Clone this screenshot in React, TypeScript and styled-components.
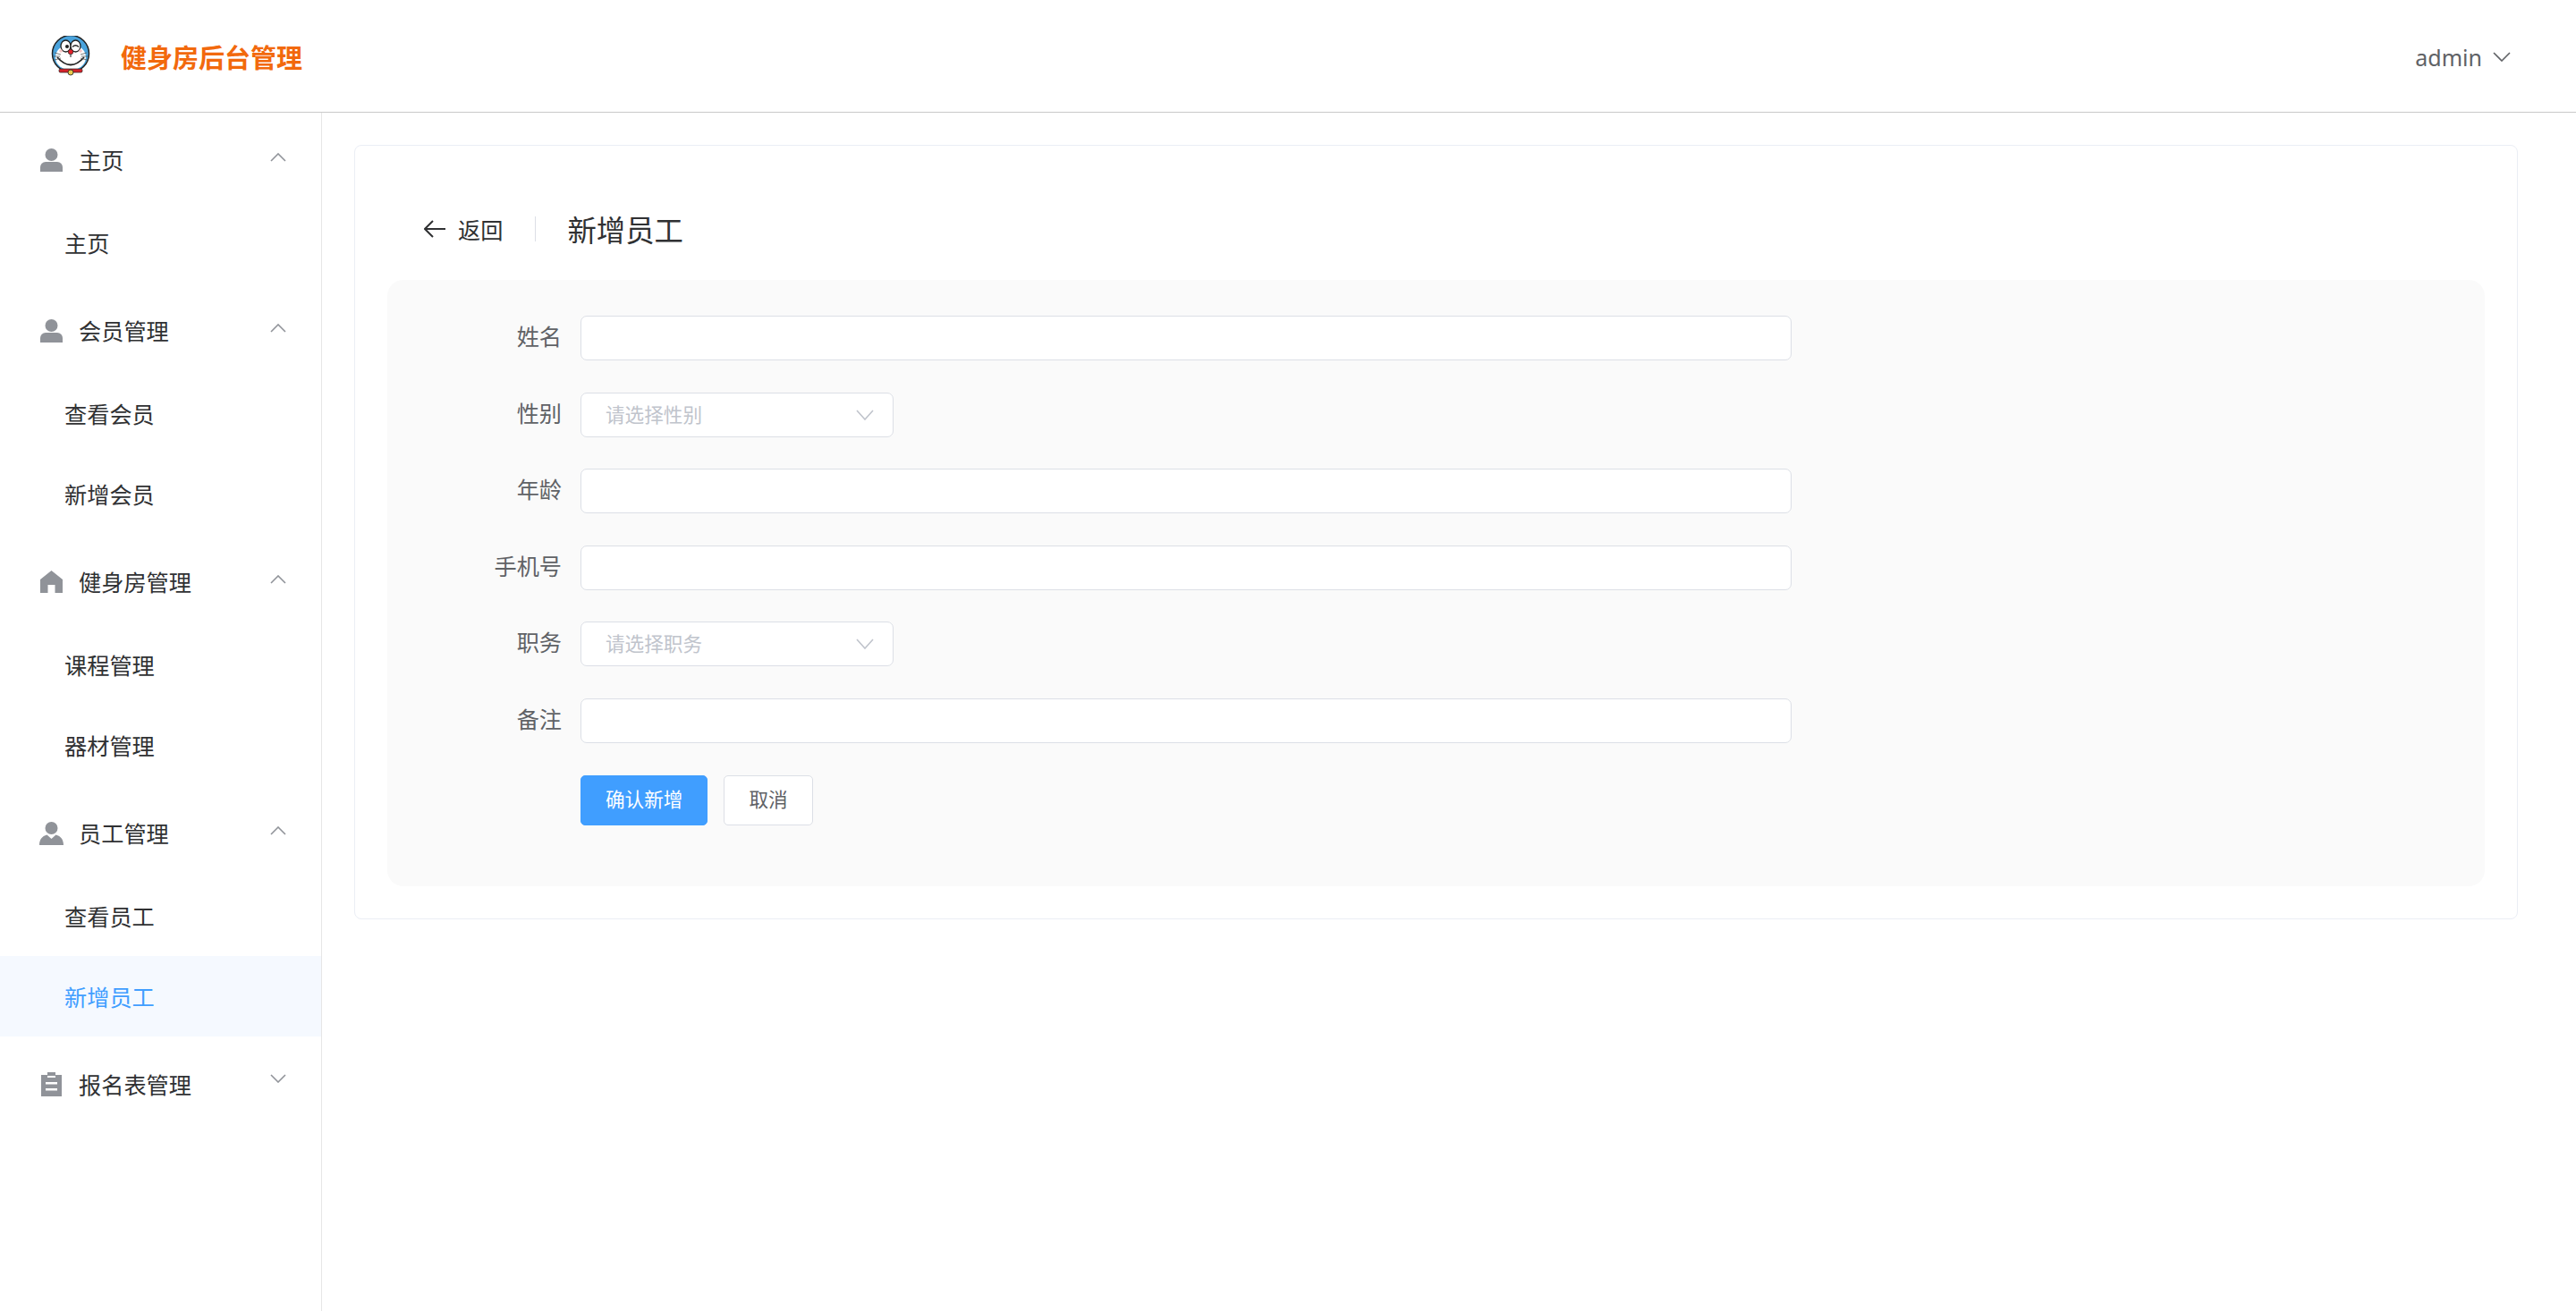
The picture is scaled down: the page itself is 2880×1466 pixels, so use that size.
import React from "react";
import styled, {createGlobalStyle} from "styled-components";

const GlobalStyle = createGlobalStyle`
  html, body {
    margin: 0;
    padding: 0;
    background: #fff;
  }
  body {
    font-family: "Noto Sans", "Noto Sans CJK SC", sans-serif;
    color: #303133;
  }
  * {
    box-sizing: border-box;
  }
`;

const Page = styled.div`
  position: relative;
  width: 2880px;
  height: 1466px;
  overflow: hidden;
`;

const Watermark = styled.div`
  position: absolute;
  top: 84px;
  left: -40px;
  display: flex;
  flex-direction: column;
  gap: 80px;
  pointer-events: none;
  z-index: 5;
`;

const WatermarkRow = styled.div`
  height: 50px;
  line-height: 50px;
  font-family: "Liberation Sans", sans-serif;
  font-size: 38px;
  letter-spacing: 4px;
  white-space: nowrap;
  color: rgba(0, 0, 0, 0.012);
`;

const Header = styled.header`
  height: 126px;
  display: flex;
  align-items: center;
  justify-content: space-between;
  padding: 0 73px 0 55px;
  border-bottom: 1px solid #c9c9c9;
`;

const Brand = styled.div`
  display: flex;
  align-items: center;
  gap: 32px;
`;

const BrandTitle = styled.div`
  font-size: 29px;
  font-weight: 700;
  color: #f2690d;
`;

const UserMenu = styled.div`
  display: flex;
  align-items: center;
  gap: 12px;
  margin-top: 2px;
  font-size: 25px;
  color: #606266;
`;

const Body = styled.div`
  display: flex;
  height: 1340px;
`;

const Aside = styled.aside`
  width: 360px;
  flex: none;
  border-right: 1px solid #e6e6e6;
`;

const GroupTitle = styled.div`
  height: 100.8px;
  display: flex;
  align-items: center;
  padding: 0 39px 0 45px;
`;

const GroupIcon = styled.span`
  width: 25px;
  height: 27px;
  margin: 6px 18px 0 0;
  display: flex;
  align-items: center;
  justify-content: center;
`;

const GroupLabel = styled.span`
  font-size: 25.2px;
  margin-top: 4px;
  color: #303133;
`;

const Arrow = styled.svg`
  display: block;
  fill: none;
  stroke-width: 1.6;
`;

const GroupArrow = styled(Arrow)`
  margin-left: auto;
  stroke: #909399;
`;

const MenuItem = styled.div<{$active?: boolean}>`
  height: 90px;
  display: flex;
  align-items: center;
  padding: 0 0 1px 72px;
  font-size: 25.2px;
  color: ${p => (p.$active ? "#409eff" : "#303133")};
  background: ${p => (p.$active ? "#f5f9ff" : "transparent")};
`;

const Main = styled.main`
  flex: 1;
  padding: 36px 65px 0 36px;
`;

const Card = styled.section`
  height: 866px;
  padding: 36px;
  border: 1px solid #ebeef5;
  border-radius: 8px;
  background: #fff;
`;

const PageHead = styled.div`
  height: 114px;
  display: flex;
  align-items: center;
  padding: 0 0 0 41px;
`;

const BackLink = styled.div`
  display: flex;
  align-items: center;
  gap: 14px;
  font-size: 25.2px;
  color: #303133;
`;

const HeadDivider = styled.div`
  width: 1px;
  height: 28px;
  margin: 0 35px 0 36px;
  background: #dcdfe6;
`;

const PageTitle = styled.div`
  padding-bottom: 2px;
  font-size: 32.4px;
  color: #303133;
`;

const FormPanel = styled.div`
  height: 678px;
  padding: 40px 0 0;
  display: flex;
  flex-direction: column;
  gap: 35.6px;
  background: #fafafa;
  border-radius: 18px;
`;

const FormRow = styled.div`
  height: 50px;
  display: flex;
  align-items: center;
`;

const FormLabel = styled.label`
  width: 216px;
  flex: none;
  padding: 0 21px 6px 0;
  text-align: right;
  font-size: 25.2px;
  color: #606266;
`;

const TextInput = styled.div`
  width: 1354px;
  height: 50px;
  background: #fff;
  border: 1px solid #dcdfe6;
  border-radius: 7px;
`;

const SelectBox = styled.div`
  width: 350px;
  height: 50px;
  display: flex;
  align-items: center;
  justify-content: space-between;
  padding: 0 21px 3px 27px;
  background: #fff;
  border: 1px solid #dcdfe6;
  border-radius: 7px;
  font-size: 21.6px;
  color: #c0c4cc;
`;

const SelectArrow = styled(Arrow)`
  margin-top: 3px;
  stroke: #c0c4cc;
`;

const ButtonRow = styled.div`
  display: flex;
  gap: 18px;
  padding-left: 216px;
`;

const Button = styled.button<{$primary?: boolean}>`
  height: 56px;
  padding: 0 27px 5px;
  border-radius: 5px;
  border: 1px solid ${p => (p.$primary ? "#409eff" : "#dcdfe6")};
  background: ${p => (p.$primary ? "#409eff" : "#fff")};
  color: ${p => (p.$primary ? "#fff" : "#606266")};
  font-family: inherit;
  font-size: 21.6px;
`;

const IconFill = "#909399";

const UserIcon = () => (
    <svg width="25" height="26" viewBox="0 0 25 26" fill={IconFill}>
        <circle cx="12.5" cy="7" r="7"/>
        <path d="M0 26v-5a6 6 0 0 1 6-6h13a6 6 0 0 1 6 6v5z"/>
    </svg>
);

const StaffIcon = () => (
    <svg width="27" height="26" viewBox="0 0 27 26" fill={IconFill} style={{flex: "none"}}>
        <circle cx="13.5" cy="7" r="7"/>
        <path d="M0 26c0-6 3-10 8.500-11.500L13.500 19l5-4.500C24 16 27 20 27 26z"/>
    </svg>
);

const HouseIcon = () => (
    <svg width="25" height="25" viewBox="0 0 25 25" fill={IconFill}>
        <path d="M12.500 0L25 10v15h-8.500V16h-8v9H0V10z"/>
    </svg>
);

const ClipboardIcon = () => (
    <svg width="23" height="27" viewBox="0 0 23 27" fill={IconFill}>
        <path d="M7 0h9v3h7v24H0V3h7z"/>
        <path d="M5 11h13v2.500H5zM5 18h13v2.500H5zM7 4h9v2H7z" fill="#fff"/>
    </svg>
);

const ChevronUp = () => (
    <GroupArrow width="18" height="10" viewBox="0 0 18 10">
        <path d="M1 9l8-8 8 8"/>
    </GroupArrow>
);

const ChevronDown = () => (
    <GroupArrow width="18" height="10" viewBox="0 0 18 10" style={{marginTop: -7}}>
        <path d="M1 1l8 8 8-8"/>
    </GroupArrow>
);

const Logo = () => (
    <svg width="48" height="46" viewBox="0 0 46 46">
        <circle cx="23" cy="20" r="20.500" fill="#4aa3dc" stroke="#222" strokeWidth="1.500"/>
        <ellipse cx="23" cy="24" rx="17" ry="14.500" fill="#fff"/>
        <ellipse cx="17.500" cy="11.500" rx="5.500" ry="6.500" fill="#fff" stroke="#222" strokeWidth="1.300"/>
        <ellipse cx="28.500" cy="11.500" rx="5.500" ry="6.500" fill="#fff" stroke="#222" strokeWidth="1.300"/>
        <circle cx="19" cy="12" r="2" fill="#222"/>
        <path d="M25 12.500q3.500-3.500 7 0" fill="none" stroke="#222" strokeWidth="1.500"/>
        <circle cx="23" cy="18" r="2.800" fill="#e3202a" stroke="#222" strokeWidth=".7"/>
        <path d="M23 21v11" stroke="#222" strokeWidth="1"/>
        <path d="M8 24q15 17 30 0" fill="#fff" stroke="#222" strokeWidth="1.800"/>
        <path d="M5 19l7 2M4 23l7 0M5 27l7-2M41 19l-7 2M42 23l-7 0M41 27l-7-2" stroke="#555" strokeWidth=".8"/>
        <circle cx="12" cy="17" r="1.800" fill="#f7c6c6"/>
        <circle cx="34" cy="17" r="1.800" fill="#f7c6c6"/>
        <rect x="10" y="37" width="26" height="4" rx="1.500" fill="#d5232a" stroke="#222" strokeWidth=".7"/>
        <circle cx="23" cy="41" r="3" fill="#e9c94a" stroke="#222" strokeWidth=".8"/>
    </svg>
);

const menu = [
    {icon: <UserIcon/>, title: "主页", open: true, items: ["主页"]},
    {icon: <UserIcon/>, title: "会员管理", open: true, items: ["查看会员", "新增会员"]},
    {icon: <HouseIcon/>, title: "健身房管理", open: true, items: ["课程管理", "器材管理"]},
    {icon: <StaffIcon/>, title: "员工管理", open: true, items: ["查看员工", "新增员工"]},
    {icon: <ClipboardIcon/>, title: "报名表管理", open: false, items: [] as string[]},
];

const fields = [
    {label: "姓名"},
    {label: "性别", placeholder: "请选择性别"},
    {label: "年龄"},
    {label: "手机号"},
    {label: "职务", placeholder: "请选择职务"},
    {label: "备注"},
];

const App = () => (
    <Page>
        <GlobalStyle/>
        <Header>
            <Brand>
                <Logo/>
                <BrandTitle>健身房后台管理</BrandTitle>
            </Brand>
            <UserMenu>
                admin
                <Arrow width="20" height="11" viewBox="0 0 20 11" stroke="#606266">
                    <path d="M1 1l9 9 9-9"/>
                </Arrow>
            </UserMenu>
        </Header>
        <Body>
            <Aside>
                {menu.map(group => (
                    <div key={group.title}>
                        <GroupTitle>
                            <GroupIcon>{group.icon}</GroupIcon>
                            <GroupLabel>{group.title}</GroupLabel>
                            {group.open ? <ChevronUp/> : <ChevronDown/>}
                        </GroupTitle>
                        {group.items.map((item, i) => (
                            <MenuItem key={i} $active={item === "新增员工"}>{item}</MenuItem>
                        ))}
                    </div>
                ))}
            </Aside>
            <Main>
                <Card>
                    <PageHead>
                        <BackLink>
                            <svg width="24" height="20" viewBox="0 0 24 20" fill="none" stroke="#303133" strokeWidth="2">
                                <path d="M10 1l-9 9 9 9M1 10h23"/>
                            </svg>
                            返回
                        </BackLink>
                        <HeadDivider/>
                        <PageTitle>新增员工</PageTitle>
                    </PageHead>
                    <FormPanel>
                        {fields.map(field => (
                            <FormRow key={field.label}>
                                <FormLabel>{field.label}</FormLabel>
                                {field.placeholder ? (
                                    <SelectBox>
                                        {field.placeholder}
                                        <SelectArrow width="20" height="12" viewBox="0 0 20 12">
                                            <path d="M1 1l9 10 9-10"/>
                                        </SelectArrow>
                                    </SelectBox>
                                ) : (
                                    <TextInput/>
                                )}
                            </FormRow>
                        ))}
                        <ButtonRow>
                            <Button $primary>确认新增</Button>
                            <Button>取消</Button>
                        </ButtonRow>
                    </FormPanel>
                </Card>
            </Main>
        </Body>
        <Watermark>
            {Array.from({length: 11}, (_, i) => (
                <WatermarkRow key={i}>{"wenwh-jiang".repeat(12)}</WatermarkRow>
            ))}
        </Watermark>
    </Page>
);

export default App;
